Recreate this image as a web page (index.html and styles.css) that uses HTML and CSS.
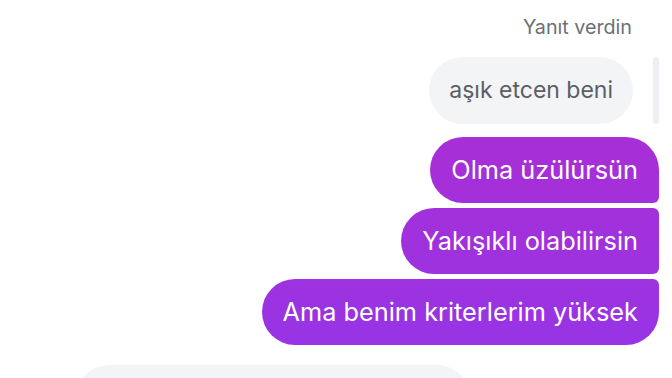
FILE: index.html
```html
<!DOCTYPE html>
<html lang="tr">
<head>
    <meta charset="UTF-8">
    <meta name="viewport" content="width=device-width, initial-scale=1.0">
    <title>Sohbet</title>
    <link rel="stylesheet" href="styles.css">
</head>
<body>
    <div class="chat">
        <div class="reply-label">Yanıt verdin</div>
        <div class="reply-row">
            <div class="reply-bubble">aşık etcen beni</div>
            <div class="reply-bar"></div>
        </div>

        <div class="bubble mine first">Olma üzülürsün</div>
        <div class="bubble mine middle">Yakışıklı olabilirsin</div>
        <div class="bubble mine last">Ama benim kriterlerim yüksek</div>

        <div class="theirs-row">
            <div class="bubble theirs">&nbsp;</div>
        </div>
    </div>
</body>
</html>
```

FILE: styles.css
```css
html, body {
    margin: 0;
    padding: 0;
}
body {
    font-family: Inter, "Noto Sans", Arial, sans-serif;
    background-color: #fff;
    color: #000;
    width: 672px;
    height: 378px;
    overflow: hidden;
}
.chat {
    display: flex;
    flex-direction: column;
    align-items: flex-end;
    padding: 14px 13px 0 0;
}
.reply-label {
    font-size: 19.7px;
    line-height: 26px;
    color: #6c6f77;
    margin-right: 27px;
}
.reply-row {
    display: flex;
    align-items: stretch;
    gap: 20px;
    margin-top: 17px;
    margin-bottom: 13px;
}
.reply-bubble {
    background: #f3f4f6;
    color: #5b5e66;
    font-size: 23px;
    line-height: 29px;
    padding: 19px 20px 19px 20px;
    border-radius: 34px;
}
.reply-bar {
    width: 6px;
    background: #eeeff2;
    border-radius: 3px;
}
.bubble {
    font-size: 25.3px;
    line-height: 30px;
    padding: 18px 21px 18px 21px;
    margin-bottom: 5px;
}
.mine {
    color: #fff;
    background: linear-gradient(180deg, #a92ed5 130px, #9734e5 350px);
    background-attachment: fixed;
}
.first {
    border-radius: 33px 33px 6px 33px;
}
.middle {
    border-radius: 33px 6px 6px 33px;
}
.last {
    border-radius: 33px 6px 33px 33px;
}
.theirs-row {
    align-self: flex-start;
    padding-left: 76px;
    margin-top: 15px;
}
.theirs {
    width: 352px;
    background: #f3f4f6;
    border-radius: 33px;
}
```
